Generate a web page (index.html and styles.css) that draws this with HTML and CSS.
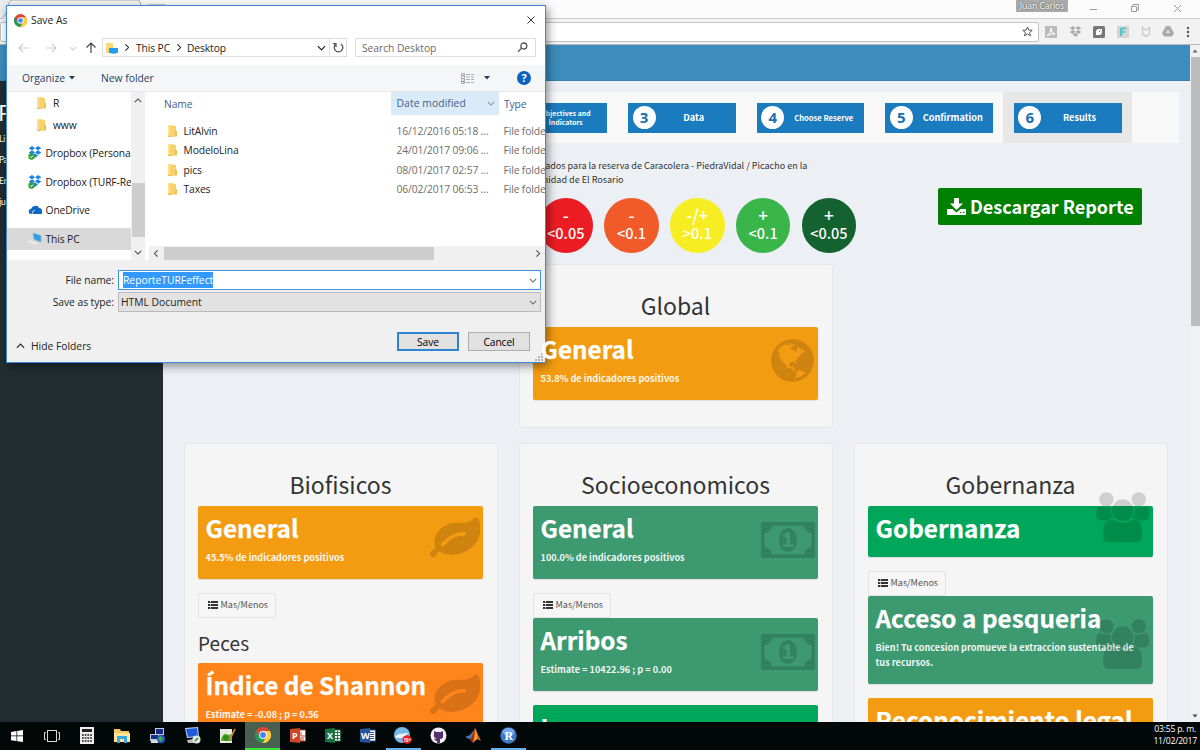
FILE: index.html
```
<!DOCTYPE html>
<html lang="es">
<head>
<meta charset="utf-8">
<title>TURFeffect</title>
<link rel="stylesheet" href="styles.css">
</head>
<body>
<svg class="defs" width="0" height="0">
  <symbol id="leaf" viewBox="0 0 1792 1792"><path d="M1280 704q0-26-19-45t-45-19q-172 0-318 49.5t-259.5 134-235.5 219.5q-19 21-19 45 0 26 19 45t45 19q24 0 45-19 27-24 74-71t67-66q137-124 268.500-176t313.500-52q26 0 45-19t19-45zm512-198q0 95-20 193-46 224-184.500 383t-357.500 268q-214 108-438 108-148 0-286-47-15-5-88-42t-96-37q-16 0-39.500 32t-45 70-52.500 70-60 32q-43 0-63.500-17.500t-45.500-59.500q-2-4-6-11t-5.500-10-3-9.500-1.500-13.500q0-35 31-73.500t68-65.500 68-56 31-48q0-4-14-38t-16-44q-9-51-9-104 0-115 43.500-220t119-184.500 170.500-139 204-95.500q55-18 145-25.500t179.500-9 178.500-6 163.500-24 113.500-56.500l29.500-29.500 29.500-28 27-20 36.500-16 43.500-4.500q39 0 70.500 46t47.500 112 24 124 8 96z"/></symbol>
  <symbol id="money" viewBox="0 0 162 108"><path fill-rule="evenodd" d="M5 0H157Q162 0 162 5V103Q162 108 157 108H5Q0 108 0 103V5Q0 0 5 0ZM33 11Q31 31 11 33V75Q31 77 33 97H129Q131 77 151 75V33Q131 31 129 11ZM81 19C98 19 108 35 108 54S98 89 81 89S54 73 54 54S64 19 81 19ZM77 31L64 41L69 48L76 43V67H66V75H97V67H87V31Z"/></symbol>
  <symbol id="users" viewBox="0 0 160 151"><circle cx="31" cy="22" r="21.500"/><circle cx="128" cy="22" r="21.500"/><circle cx="80" cy="54" r="32.500"/><path d="M45 82Q50 82 56 86Q80 100 104 86Q110 82 115 82Q138 84 138 130Q138 151 118 151H42Q21 151 21 130Q21 84 45 82ZM12 42Q32 51 45 45Q41 66 53 78Q42 77 34 85H17Q0 85 0 68Q0 42 12 42ZM148 42Q128 51 115 45Q119 66 107 78Q118 77 126 85H143Q160 85 160 68Q160 42 148 42Z"/></symbol>
  <symbol id="list" viewBox="0 0 30 24"><path d="M0 0H7V6H0ZM9 0H30V6H9ZM0 9H7V15H0ZM9 9H30V15H9ZM0 18H7V24H0ZM9 18H30V24H9Z"/></symbol>
  <symbol id="folder" viewBox="0 0 9 12"><path fill="#ffe08a" d="M0 0H6V10H0Z"/><path fill="#f6d16c" d="M2 1H8V11.500H2Z"/><path fill="#ecc052" d="M7 6H9V11.500H7ZM0 10L6 12H0Z"/></symbol>
  <symbol id="dropbox" viewBox="0 0 42 36"><path d="M12 0L21 7L12 13L2 7ZM30 0L40 7L30 13L21 7ZM12 13L21 19L12 26L2 20ZM30 13L40 20L30 26L21 19ZM21 22L30 29L21 35L12 29Z"/></symbol>
  <symbol id="chrome" viewBox="0 0 16 16"><circle cx="8" cy="8" r="8" fill="#dc4636"/><path fill="#1e9d57" d="M1.070 4A8 8 0 0 0 7.600 16L11.200 10L8 8L4.600 10Z"/><path fill="#fdcf3d" d="M14.930 4A8 8 0 0 1 7.600 16L11.400 9.500L8 4Z"/><circle cx="8" cy="8" r="3.900" fill="#f5f7fb"/><circle cx="8" cy="8" r="2.900" fill="#4584ee"/></symbol>
  <symbol id="chev" viewBox="0 0 10 6"><path d="M1 1L5 5L9 1" fill="none" stroke="currentColor" stroke-width="1.300"/></symbol>
</svg>

<div class="screen">
  <div class="titlebar">
    <svg class="tab-shape" width="175" height="19"><path d="M0 19Q5 18 7 10Q9 0 12 0H139L147 19" fill="#f6f6f6" stroke="#aaa"/><path d="M148 4H165L169 12H151Z" fill="#d0d0d0"/></svg>
    <span class="user">Juan Carlos</span>
    <svg class="winctl" width="108" height="18" fill="none" stroke="#999"><path d="M9 9.500H16M50.500 6.500H55.500V11.500H50.500ZM52 6V4.500H57.500V10H56M93 5L100 12M100 5L93 12"/></svg>
  </div>
  <div class="toolbar">
    <div class="omnibox"><svg width="11" height="11" viewBox="0 0 11 11"><path d="M5.500 1L6.800 4.100L10.200 4.300L7.600 6.500L8.500 9.800L5.500 8L2.500 9.800L3.400 6.500L.8 4.300L4.200 4.100Z" fill="none" stroke="#555"/></svg></div>
    <div class="exts">
      <svg width="12" height="12"><rect width="12" height="12" fill="#bbb"/><path d="M2 10Q6 7 6 2Q6 7 10 8Q6 7 2 10Z" fill="none" stroke="#fff"/></svg>
      <svg width="13" height="11" fill="#aaa"><use href="#dropbox"/></svg>
      <svg width="12" height="12"><rect width="12" height="12" rx="1.500" fill="#777"/><path d="M3 6Q3 3 6 3H9V6Q9 9 6 9H3Z" fill="#fff"/><path d="M6 6L7.500 4.500" stroke="#777"/></svg>
      <svg width="12" height="12"><rect width="12" height="12" rx="1" fill="#d4d4d4"/><path d="M4 10V2.500H9M4 6H8" fill="none" stroke="#2fc4cf" stroke-width="1.600"/></svg>
      <svg width="10" height="12"><path d="M1.500 1.500V8L5 10.500L8.500 8V1.500L5 4Z" fill="none" stroke="#ccc" stroke-width="1.500"/></svg>
      <svg width="12" height="11"><path d="M4 0H8L12 7L10 10.500H2L0 7Z" fill="#aaa"/><path d="M6 4L8 7H4Z" fill="#eee"/></svg>
      <svg width="4" height="12" fill="#555"><circle cx="2" cy="2" r="1.200"/><circle cx="2" cy="6" r="1.200"/><circle cx="2" cy="10" r="1.200"/></svg>
    </div>
  </div>

  <div class="viewport">
    <div class="page">
      <div class="topbar"></div>
      <div class="body-row">
        <aside class="side"><h1>P</h1><p>Li</p><p>Pa</p><p>En</p><p>ju</p></aside>
        <main class="main">
          <nav class="steps">
            <div class="step"><div class="step-btn"><b>2</b><span class="small">Objectives and<br>Indicators</span></div></div>
            <div class="step"><div class="step-btn"><b>3</b><span>Data</span></div></div>
            <div class="step"><div class="step-btn"><b>4</b><span class="mid">Choose Reserve</span></div></div>
            <div class="step"><div class="step-btn"><b>5</b><span class="conf">Confirmation</span></div></div>
            <div class="step active"><div class="step-btn"><b>6</b><span>Results</span></div></div>
          </nav>
          <div class="grid">
            <section class="intro">
              <p>Resultados para la reserva de Caracolera - PiedraVidal / Picacho en la<br>comunidad de El Rosario</p>
              <div class="legend">
                <div class="dot red"><i>-</i>&lt;0.05</div>
                <div class="dot orange"><i>-</i>&lt;0.1</div>
                <div class="dot yellow"><i>-/+</i>&gt;0.1</div>
                <div class="dot lime"><i>+</i>&lt;0.1</div>
                <div class="dot forest"><i>+</i>&lt;0.05</div>
              </div>
            </section>
            <div class="report"><a class="download"><svg width="19" height="17" viewBox="0 0 19 17" fill="#fff"><path d="M7 0H12V5.500H16L9.500 12L3 5.500H7ZM0 11H5.500L9.500 14.500L13.500 11H19V17H0Z"/><path d="M13 14.500H14.500M16 14.500H17.500" stroke="green"/></svg>Descargar Reporte</a></div>

            <section class="well global">
              <h2>Global</h2>
              <div class="box amber"><h3>General</h3><p>53.8% de indicadores positivos</p>
                <svg class="ic globe" viewBox="128 128 1536 1536"><path d="M896 128q209 0 385.500 103t279.500 279.500 103 385.500-103 385.500-279.500 279.500-385.500 103-385.500-103-279.500-279.500-103-385.500 103-385.500 279.500-279.500 385.500-103zm274 521q-2 1-9.500 9.500t-13.500 9.500q2 0 4.500-5t5-11 3.500-7q6-7 22-15 14-6 52-12 34-8 51 11-2-2 9.500-13t14.500-12q3-2 15-4.500t15-7.500l2-22q-12 1-17.500-7t-6.500-21q0 2-6 8 0-7-4.500-8t-11.500 1-9 1q-10-3-15-7.500t-8-16.500-4-15q-2-5-9.500-11t-9.500-10q-1-2-2.500-5.500t-3-6.500-4-5.500-5.500-2.500-7 5-7.500 10-4.500 5q-3-2-6-1.500t-4.500 1-4.500 3-5 3.500q-3 2-8.500 3t-8.500 2q15-5-1-11-10-4-16-3 9-4 7.500-12t-8.500-14h5q-1-4-8.500-8.500t-17.500-8.500-13-6q-8-5-34-9.500t-33-.5q-5 6-4.500 10.500t4 14 3.500 12.500q1 6-5.500 13t-6.500 12q0 7 14 15.500t10 21.500q-3 8-16 16t-16 12q-5 8-1.500 18.500t10.500 16.500q2 2 1.500 4t-3.500 4.500-5.500 4-6.500 3.500l-3 2q-11 5-20.500-6t-13.500-26q-7-25-16-30-23-8-29 1-5-13-41-26-25-9-58-4 6-1 0-15-7-15-19-12 3-6 4-17.500t1-13.500q3-13 12-23 1-1 7-8.500t9.500-13.500.5-6q35 4 50-11 5-5 11.500-17t10.500-17q9-6 14-5.500t14.500 5.500 14.500 5q14 1 15.500-11t-7.500-20q12 1 3-17-4-7-8-9-12-4-27 5-8 4 2 8-1-1-9.500 10.500t-16.500 17.500-16-5q-1-1-5.500-13.500t-9.500-13.500q-8 0-16 15 3-8-11-15t-24-8q19-12-8-27-7-4-20.500-5t-19.500 4q-5 7-5.500 11.500t5 8 10.500 5.500 11.500 4 8.500 3q14 10 8 14-2 1-8.500 3.500t-11.500 4.500-6 4q-3 4 0 14t-2 14q-5-5-9-17.500t-7-16.500q7 9-25 6l-10-1q-4 0-16 2t-20.500 1-13.500-8q-4-8 0-20 1-4 4-2-4-3-11-9.500t-10-8.500q-46 15-94 41 6 1 12-1 5-2 13-6.500t10-5.500q34-14 42-7l5-5q14 16 20 25-7-4-30-1-20 6-22 12 7 12 5 18-4-3-11.500-10t-14.500-11-15-5q-16 0-22 1-146 80-235 222 7 7 12 8 4 1 5 9t2.500 11 11.500-3q9 8 3 19 1-1 44 27 19 17 21 21 3 11-10 18-1-2-9-9t-9-4q-3 5 .5 18.500t10.500 12.500q-7 0-9.500 16t-2.500 35.500-1 23.500l2 1q-3 12 5.500 34.500t21.500 19.500q-13 3 20 43 6 8 8 9 3 2 12 7.500t15 10 10 10.500q4 5 10 22.500t14 23.500q-2 6 9.500 20t10.500 23q-1 0-2.500 1t-2.500 1q3 7 15.500 14t15.500 13q1 3 2 10t3 11 8 2q2-20-24-62-15-25-17-29-3-5-5.500-15.500t-4.500-14.500q2 0 6 1.500t8.500 3.500 7.500 4 2 3q-3 7 2 17.500t12 18.500 17 19 12 13q6 6 14 19.500t0 13.500q9 0 20 10t17 20q5 8 8 26t5 24q2 7 8.500 13.500t12.500 9.500l16 8 13 7q5 2 18.500 10.500t21.500 11.500q10 4 16 4t14.500-2.500 13.500-3.500q15-2 29 15t21 21q36 19 55 11-2 1 .5 7.500t8 15.500 9 14.500 5.500 8.500q5 6 18 15t18 15q6-4 7-9-3 8 7 20t18 10q14-3 14-32-31 15-49-18 0-1-2.500-5.500t-4-8.500-2.500-8.500 0-7.500 5-3q9 0 10-3.500t-2-12.500-4-13q-1-8-11-20t-12-15q-5 9-16 8t-16-9q0 1-1.500 5.500t-1.500 6.500q-13 0-15-1 1-3 2.500-17.500t3.500-22.500q1-4 5.500-12t7.500-14.500 4-12.500-4.500-9.500-17.500-2.500q-19 1-26 20-1 3-3 10.500t-5 11.500-9 7q-7 3-24 2t-24-5q-13-8-22.500-29t-9.500-37q0-10 2.500-26.500t3-25-5.500-24.500q3-2 9-9.500t10-10.500q2-1 4.500-1.500t4.500 0 4-1.500 3-6q-1-1-4-3-3-3-4-3 7 3 28.500-1.500t27.500 1.500q15 11 22-2 0-1-2.500-9.500t-.5-13.500q5 27 29 9 3 3 15.500 5t17.500 5q3 2 7 5.500t5.500 4.500 5-.5 8.500-6.500q10 14 12 24 11 40 19 44 7 3 11 2t4.500-9.500 0-14-1.500-12.500l-1-8v-18l-1-8q-15-3-18.500-12t1.500-18.500 15-18.500q1-1 8-3.500t15.500-6.500 12.500-8q21-19 15-35 7 0 11-9-1 0-5-3t-7.500-5-4.500-2q9-5 2-16 5-3 7.500-11t7.500-10q9 12 21 2 8-8 1-16 5-7 20.500-10.500t18.500-9.500q7 2 8-2t1-12 3-12q4-5 15-9t13-5l17-11q3-4 0-4 18 2 31-11 10-11-6-20 3-6-3-9.500t-15-5.500q3-1 11.500-.5t10.500-1.500q15-10-7-16-17-5-43 12zm-163 877q206-36 351-189-3-3-12.500-4.500t-12.500-3.500q-18-7-24-8 1-7-2.500-13t-8-9-12.500-8-11-7q-2-2-7-6t-7-5.500-7.500-4.500-8.500-2-10 1l-3 1q-3 1-5.500 2.500t-5.500 3-4 3 0 2.500q-21-17-36-22-5-1-11-5.500t-10.500-7-10-1.500-11.500 7q-5 5-6 15t-2 13q-7-5 0-17.500t2-18.500q-3-6-10.500-4.500t-12 4.500-11.500 8.500-9 6.500-8.500 5.500-8.500 7.500q-3 4-6 12t-5 11q-2-4-11.500-6.500t-9.500-5.500q2 10 4 35t5 38q7 31-12 48-27 25-29 40-4 22 12 26 0 7-8 20.500t-7 21.500q0 6 2 16z"/></svg></div>
            </section>

            <section class="well c1">
              <h2>Biofisicos</h2>
              <div class="box amber"><h3>General</h3><p>45.5% de indicadores positivos</p><svg class="ic leaf"><use href="#leaf"/></svg></div>
              <div class="toggle"><svg width="10" height="8"><use href="#list"/></svg>Mas/Menos</div>
              <h4>Peces</h4>
              <div class="box tangerine"><h3>Índice de Shannon</h3><p>Estimate = -0.08 ; p = 0.56</p><svg class="ic leaf"><use href="#leaf"/></svg></div>
            </section>

            <section class="well c2">
              <h2>Socioeconomicos</h2>
              <div class="box olive"><h3>General</h3><p>100.0% de indicadores positivos</p><svg class="ic money"><use href="#money"/></svg></div>
              <div class="toggle"><svg width="10" height="8"><use href="#list"/></svg>Mas/Menos</div>
              <div class="box olive"><h3>Arribos</h3><p>Estimate = 10422.96 ; p = 0.00</p><svg class="ic money"><use href="#money"/></svg></div>
              <div class="box green"><h3>Ingresos</h3></div>
            </section>

            <section class="well c3">
              <h2>Gobernanza</h2>
              <div class="box green short"><h3>Gobernanza</h3><svg class="ic users"><use href="#users"/></svg></div>
              <div class="toggle"><svg width="10" height="8"><use href="#list"/></svg>Mas/Menos</div>
              <div class="box olive tall"><h3>Acceso a pesqueria</h3><p>Bien! Tu concesion promueve la extraccion sustentable de tus recursos.</p><svg class="ic users"><use href="#users"/></svg></div>
              <div class="box amber"><h3>Reconocimiento legal</h3></div>
            </section>
          </div>
        </main>
      </div>
    </div>
    <div class="vscroll"><svg width="10" height="12"><path d="M2.500 7.500H7.500L5 4.500Z" fill="#666"/></svg><div class="thumb"></div><svg class="down" width="10" height="12"><path d="M2.500 4.500H7.500L5 7.500Z" fill="#444"/></svg></div>
  </div>

  <footer class="taskbar">
    <div class="apps">
      <span><svg width="12" height="12" fill="#fff"><path d="M0 2L5.500 1V5.600H0ZM6.200 .9L12 0V5.600H6.200ZM0 6.300H5.500V11L0 10.200ZM6.200 6.300H12V12L6.200 11.200Z"/></svg></span>
      <span><svg width="16" height="12" fill="none" stroke="#ddd"><rect x="3.500" y=".5" width="9" height="11"/><path d="M2 2.500H.5V9.500H2M14 2.500H15.500V9.500H14"/></svg></span>
      <span><svg width="14" height="17"><rect width="14" height="17" fill="#eee"/><path d="M2 3.500H12" stroke="#222" stroke-width="3"/><path d="M2 8H12M2 11H12M2 14H12" stroke="#222" stroke-width="1.600" stroke-dasharray="1.800 .9"/></svg></span>
      <span><svg width="16" height="14"><path d="M0 0H6L7 2H15V13H0Z" fill="#f3ca62"/><path d="M0 4H16V13H0Z" fill="#ffe59a"/><path d="M3 14V7H13V14H10V10H6V14Z" fill="#38a9e4"/></svg></span>
      <span><svg width="17" height="17"><path d="M6 1H15V8H6ZM1 7H10V14H1Z" fill="#c3cbdc"/><path d="M7 2H14V7H7ZM2 8H9V12H2Z" fill="#182a8c"/><circle cx="12" cy="12" r="4.200" fill="#2458cf"/><path d="M9 11L12 9L14 12L11 15Z" fill="#42b532"/><path d="M2 15H9" stroke="#ddd" stroke-width="2"/></svg></span>
      <span><svg width="17" height="17"><path d="M1 1L14 0L15 10L3 11Z" fill="#c6d8ff"/><path d="M2 2L13 1L14 9L4 10Z" fill="#205add"/><path d="M3 13L10 12V16H4Z" fill="#bbb"/><circle cx="12.500" cy="12.500" r="4" fill="#dce9df"/><path d="M11 14L14 11" stroke="#2c8340" stroke-width="1.500"/></svg></span>
      <span><svg width="17" height="16"><path d="M1 1H13V15H1Z" fill="#e9eddf"/><path d="M2 11Q5 3 9 7L13 6V13H2Z" fill="#5db52c"/><circle cx="7" cy="10" r="3" fill="#348b20"/><path d="M10 13L16 1" stroke="#c38a35" stroke-width="1.700"/></svg></span>
      <span class="current"><svg width="16" height="16"><use href="#chrome"/></svg></span>
      <span><svg class="office" width="16" height="15"><path d="M8 2H15.500V13H8Z" fill="#fff" stroke="#cd4727"/><path d="M11 4V8H15M10 10H14M10 12H14" stroke="#cd4727" fill="none"/><path d="M0 1L10 0V15L0 14Z" fill="#cd4727"/><text x="2" y="11">P</text></svg></span>
      <span><svg class="office" width="16" height="15"><path d="M8 2H15.500V13H8Z" fill="#fff" stroke="#1d7044"/><path d="M10 4.500H15M10 7.500H15M10 10.500H15M12.500 3V12" stroke="#1d7044" fill="none"/><path d="M0 1L10 0V15L0 14Z" fill="#1d7044"/><text x="2" y="11">X</text></svg></span>
      <span><svg class="office" width="16" height="15"><path d="M8 2H15.500V13H8Z" fill="#fff" stroke="#28549a"/><path d="M10 4.500H14M10 6.500H14M10 8.500H14M10 10.500H14" stroke="#28549a" fill="none"/><path d="M0 1L10 0V15L0 14Z" fill="#28549a"/><text x="1" y="11">W</text></svg></span>
      <span class="open"><svg width="18" height="17"><circle cx="8" cy="8" r="8" fill="#75b9e4"/><path d="M1 9L5 7L14 6L12 9L8 11L2 11Z" fill="#e9f2f6"/><ellipse cx="13" cy="12.500" rx="4.600" ry="4.200" fill="#ed1c24"/><text x="9.500" y="14.500" class="badge">10+</text></svg></span>
      <span><svg width="17" height="17"><circle cx="8.500" cy="8.500" r="8" fill="#f3eff6"/><path d="M4 4L6.500 5H10.500L13 4V7Q14 12 10 12V16H7V14Q5 14 4 12L7 12Q3 11 4 7Z" fill="#54306f"/></svg></span>
      <span><svg width="17" height="16"><path d="M0 9L5 7L8 3L7 12L4 11Z" fill="#3f79bd"/><path d="M5 11L10 0L16 13L12 11L8 15Z" fill="#df6424"/><path d="M8 14Q11 7 10 0Q13 8 12 11Z" fill="#f3a53c"/><path d="M5 11Q8 8 10 0L8 15Z" fill="#8c2b22"/></svg></span>
      <span class="open"><svg width="17" height="17"><circle cx="8.500" cy="8.500" r="8.200" fill="#3979c9"/><ellipse cx="8.500" cy="5" rx="6" ry="4" fill="#72aaf0"/><text x="4.500" y="13" class="rr">R</text></svg></span>
    </div>
    <div class="clock">03:55 p. m.<br>11/02/2017</div>
  </footer>
</div>

<div class="dialog">
  <div class="d-title"><svg width="13" height="13"><use href="#chrome"/></svg><span>Save As</span><svg class="close" width="8" height="8" stroke="#333"><path d="M.5 .5L7.500 7.500M7.500 .5L.5 7.500"/></svg></div>
  <div class="d-addr">
    <svg class="arrows" width="80" height="14" fill="none" stroke="#d0d0d0" stroke-width="1.200"><path d="M11 7H1M5 3L1 7L5 11M28 7H38M34 3L38 7L34 11M52 6L55 9L58 6"/><path stroke="#444" d="M73 12V2M68.500 6.500L73 2L77.500 6.500"/></svg>
    <div class="crumbs"><svg width="12" height="12"><path d="M0 1H7V11H0Z" fill="#f9d977"/><path d="M3 6H12V11H3Z" fill="#229cf0"/><path d="M5 12H10" stroke="#1673b0"/></svg><svg class="r" width="8" height="5"><use href="#chev"/></svg><span class="pc">This PC</span><svg class="r r2" width="8" height="5"><use href="#chev"/></svg><span>Desktop</span><svg class="dn" width="9" height="6"><use href="#chev"/></svg><i></i><svg width="11" height="11" fill="none" stroke="#555" stroke-width="1.300"><path d="M3 2A4.300 4.300 0 1 0 8 2M3 5V1.700H0"/></svg></div>
    <div class="search"><span>Search Desktop</span><svg width="11" height="11" fill="none" stroke="#555" stroke-width="1.300"><circle cx="6.800" cy="4" r="3"/><path d="M4.500 6.200L1 9.700"/></svg></div>
  </div>
  <div class="d-tools"><span>Organize</span><svg class="tri" width="6" height="4"><path d="M0 0H6L3 3.500Z" fill="#223b5b"/></svg><span class="nf">New folder</span>
    <svg class="view" width="14" height="11"><path d="M.5 .5H3.500V10.500H.5Z" fill="#eee" stroke="#aaa"/><path d="M1.500 2.500H3" stroke="#48a"/><path d="M1.500 5.500H3" stroke="#d73"/><path d="M1.500 8.500H3" stroke="#383"/><path d="M5 1.500H9M10 1.500H13M5 4H9M10 4H13M5 6.500H9M10 6.500H13M5 9.500H9M10 9.500H13" stroke="#aaa"/></svg><svg class="tri2" width="6" height="4"><path d="M0 0H6L3 3.500Z" fill="#223b5b"/></svg><b class="help">?</b></div>
  <div class="d-body">
    <div class="tree">
      <div class="node sub"><svg width="9" height="12"><use href="#folder"/></svg>R</div>
      <div class="node sub w"><svg width="9" height="12"><use href="#folder"/></svg>www</div>
      <div class="node"><svg width="15" height="14" fill="#1a82e2"><use href="#dropbox" width="14" height="12"/><circle cx="3.500" cy="10.500" r="3.200" fill="#31a035"/><path d="M2 10.500L3.200 11.700L5 9.500" stroke="#fff" fill="none"/></svg>Dropbox (Personal)</div>
      <div class="node"><svg width="15" height="14" fill="#1a82e2"><use href="#dropbox" width="14" height="12"/><circle cx="3.500" cy="10.500" r="3.200" fill="#31a035"/><path d="M2 10.500L3.200 11.700L5 9.500" stroke="#fff" fill="none"/></svg>Dropbox (TURF-Reserve)</div>
      <div class="node"><svg width="15" height="10"><path d="M1 8Q0 4 3 4Q4 1 7 1Q10 0 11 3Q14 3 14 6V9H2Z" fill="#1067c4"/><path d="M4 9Q4 6 7 5" stroke="#fff" fill="none" stroke-width=".8"/></svg>OneDrive</div>
      <div class="node sel"><svg width="15" height="13"><path d="M5 1L13 3.500V10L6 7.500Z" fill="#2f9ee6" stroke="#8fb4cf"/><path d="M0 9L9 12" stroke="#eee" stroke-width="2"/></svg>This PC</div>
    </div>
    <div class="t-scroll"><svg class="up" width="8" height="5"><use href="#chev"/></svg><div></div><svg width="8" height="5"><use href="#chev"/></svg></div>
    <div class="files">
      <div class="f-head"><span>Name</span><span class="dm">Date modified<svg width="8" height="5"><use href="#chev"/></svg></span><span class="ty">Type</span></div>
      <div class="f-row"><svg width="9" height="12"><use href="#folder"/></svg><span>LitAlvin</span><em>16/12/2016 05:18 ...</em><em>File folder</em></div>
      <div class="f-row"><svg width="9" height="12"><use href="#folder"/></svg><span>ModeloLina</span><em>24/01/2017 09:06 ...</em><em>File folder</em></div>
      <div class="f-row"><svg width="9" height="12"><use href="#folder"/></svg><span>pics</span><em>08/01/2017 02:57 ...</em><em>File folder</em></div>
      <div class="f-row"><svg width="9" height="12"><use href="#folder"/></svg><span>Taxes</span><em>06/02/2017 06:53 ...</em><em>File folder</em></div>
      <div class="h-scroll"><svg class="l" width="8" height="5"><use href="#chev"/></svg><div></div><svg class="rt" width="8" height="5"><use href="#chev"/></svg></div>
    </div>
  </div>
  <div class="d-foot">
    <div class="field"><label>File name:</label><div class="inp"><mark>ReporteTURFeffect</mark><svg width="8" height="5"><use href="#chev"/></svg></div></div>
    <div class="field"><label>Save as type:</label><div class="inp sel-box"><span>HTML Document</span><svg width="8" height="5"><use href="#chev"/></svg></div></div>
    <div class="actions"><svg width="9" height="6"><use href="#chev"/></svg><span>Hide Folders</span><button class="ok">Save</button><button>Cancel</button></div>
    <svg class="grip" width="8" height="8" fill="#b0b0b0"><path d="M6 0H8V2H6ZM3 3H5V5H3ZM6 3H8V5H6ZM0 6H2V8H0ZM3 6H5V8H3ZM6 6H8V8H6Z"/></svg>
  </div>
</div>
</body>
</html>
```
FILE: styles.css
```
* { box-sizing: border-box; }
html, body { margin: 0; height: 750px; overflow: hidden; }
body { font-family: "Noto Sans CJK SC", "Open Sans", sans-serif; color: #333; position: relative; width: 1200px; }
h1, h2, h3, h4, p { margin: 0; }
svg { display: block; flex: none; }
.defs { position: absolute; }
.screen { display: flex; flex-direction: column; width: 1200px; height: 750px; overflow: hidden; }

/* browser frame */
.titlebar { height: 19px; flex: none; display: flex; align-items: flex-start; background: #fcfcfc; border-bottom: 1px solid #cfcfcf; }
.user { margin-left: auto; width: 52px; height: 12px; background: #aaa; color: #fff; font: 8.5px/11px "Open Sans", sans-serif; text-align: center; text-shadow: 0 0 2px #333; }
.winctl { margin-left: 13px; margin-right: 11px; }
.tab-shape { background: linear-gradient(90deg, #ececec, #fcfcfc); }
.toolbar { height: 26px; flex: none; display: flex; align-items: center; background: #f2f2f2; border-bottom: 1px solid #b9b9b9; }
.omnibox { width: 1039px; height: 20px; background: #fff; border: 1px solid #c2c2c2; border-radius: 2px; display: flex; align-items: center; justify-content: flex-end; padding-right: 5px; }
.exts { flex: 1; display: flex; align-items: center; justify-content: space-between; padding: 0 10px 0 6px; }
.viewport { flex: none; height: 676.5px; display: flex; overflow: hidden; }
.page { width: 1190px; overflow: hidden; }
.topbar { height: 36px; background: #3c8dbc; border-bottom: 1px solid #367fa9; }
.body-row { display: flex; height: 642px; }
.side { width: 163px; background: #222d32; color: #fff; padding-top: 16px; overflow: hidden; font-size: 8.500px; line-height: 21px; letter-spacing: -.6px; }
.side h1 { font-size: 22px; line-height: 28px; font-weight: 400; margin: 0 0 3px -2px; }
.side p { margin-left: -1px; }
.main { flex: 1; background: #ecf0f5; overflow: hidden; padding-top: 11px; }
.vscroll { width: 10px; background: #f1f1f1; display: flex; flex-direction: column; }
.vscroll .thumb { height: 269px; background: #bcbcbc; margin-left: 1px; }
.vscroll .down { margin-top: auto; }

/* step navigation */
.steps { height: 51px; margin: 0 11.500px 0 12px; background: #f8f8f8; display: flex; justify-content: flex-end; padding-right: 46.500px; }
.step { width: 128.600px; padding: 10.500px; }
.step.active { background: #e7e7e7; }
.step-btn { height: 30px; background: #1b7bbf; color: #fff; display: flex; align-items: center; padding-left: 4.500px; }
.step-btn b { width: 23px; height: 23px; border-radius: 50%; background: #fff; color: #1b6fae; font: bold 15px/23px "Open Sans", sans-serif; text-align: center; flex: none; }
.step-btn span { flex: 1; text-align: center; font-size: 9.200px; font-weight: 700; line-height: 13px; padding-right: 4px; }
.step-btn .conf { padding-right: 0; }
.step-btn .mid { font-size: 7.600px; padding-right: 1px; }
.step-btn .small { font-size: 6.900px; line-height: 9px; padding-right: 3px; }

/* results grid */
.grid { display: grid; grid-template-columns: repeat(3, 313.500px); column-gap: 21.500px; padding-left: 21px; grid-template-rows: 121px 164px auto; }
.intro { grid-column: 2; padding-top: 16px; white-space: nowrap; }
.intro p { font-size: 9.050px; line-height: 14.300px; }
.legend { display: flex; gap: 11.200px; padding-top: 10.500px; margin-left: 19.500px; width: 320px; }
.dot { flex: none; width: 54.600px; height: 54.600px; border-radius: 50%; color: #fff; text-align: center; font-size: 14.500px; line-height: 18px; padding-top: 8px; font-weight: 500; }
.dot i { display: block; font-style: normal; font-size: 17px; }
.red { background: #ec1c24; } .orange { background: #f15a29; } .yellow { background: #f6ee23; }
.lime { background: #3ab54a; } .forest { background: #14622f; }
.report { padding: 45px 25.500px 0 0; display: flex; justify-content: flex-end; align-items: flex-start; }
.download { width: 204px; height: 37px; background: #008000; border-radius: 2px; color: #fff; display: flex; align-items: center; padding-left: 9px; gap: 4px; font-size: 18px; font-weight: 700; line-height: 37px; white-space: nowrap; }
.well { background: #f5f5f5; border: 1px solid #e6e6e6; border-radius: 3px; padding: 27px 13.500px 0 13px; }
.global { grid-column: 2; }
.c1 { grid-column: 1; } .c1, .c2, .c3 { margin-top: 15px; height: 320px; }
h2 { text-align: center; font-size: 23px; line-height: 26px; font-weight: 400; margin-bottom: 8.500px; }
h4 { font-size: 19px; font-weight: 400; line-height: 24px; padding: 13.500px 0 7.500px; letter-spacing: .1px; }
.box { position: relative; height: 73px; margin-bottom: 14.500px; border-radius: 2px; color: #fff; padding: 6px 7.500px; box-shadow: 0 1px 1px rgba(0,0,0,.1); }
.box h3 { font-size: 24.300px; line-height: 32px; font-weight: 700; white-space: nowrap; position: relative; z-index: 1; -webkit-text-stroke: .25px #fff; }
.box p { font-size: 9.150px; line-height: 15px; font-weight: 700; padding-top: 6.500px; position: relative; opacity: .92; }
.short { height: 51px; } .tall { height: 88px; }
.amber { background: #f39c12; } .tangerine { background: #ff851b; } .olive { background: #3d9970; } .green { background: #00a65a; }
.ic { position: absolute; fill: rgba(0,0,0,.15); }
.globe { width: 43px; height: 43px; right: 4px; top: 12.500px; }
.leaf { width: 50.500px; height: 50.500px; right: 3px; top: 8.500px; }
.money { width: 54px; height: 36px; right: 3.500px; top: 16px; }
.users { width: 53.500px; height: 50.500px; right: 3.500px; top: -13.500px; }
.tall .users { top: 23px; }
.toggle { width: 78px; height: 24.500px; border: 1px solid #e2e2e2; border-radius: 2px; background: #f6f6f6; display: flex; align-items: center; gap: 3px; padding-left: 8.500px; font-size: 9px; line-height: 22px; color: #555; }
.toggle svg { fill: #333; }

/* taskbar */
.taskbar { flex: 1; background: #020708; display: flex; justify-content: space-between; position: relative; }
.apps { display: flex; margin-left: -.5px; }
.apps span { width: 35.100px; display: flex; align-items: center; justify-content: center; }
.apps .current { background: #48604f; border-bottom: 2px solid #39e33b; }
.apps .open { box-shadow: inset 0 -2px #6aaeea; }
.office text { font: bold 9px "Open Sans", sans-serif; fill: #fff; }
.badge { font: bold 4.500px "Open Sans", sans-serif; fill: #fff; }
.rr { font: bold 12px "Liberation Serif", serif; fill: #fff; }
.clock { color: #fff; font: 8.600px/12.500px "Open Sans", sans-serif; text-align: center; padding: 1px 3px 0 0; letter-spacing: -.2px; white-space: nowrap; }

/* save dialog */
.dialog { position: absolute; left: 6px; top: 5px; width: 540px; height: 358px; border: 1px solid #3c8bd8; background: #fff; box-shadow: 2px 3px 9px rgba(0,0,0,.45); font: 10.300px/14px "Open Sans", sans-serif; letter-spacing: -.12px; color: #222; display: flex; flex-direction: column; }
.d-title { height: 28px; display: flex; align-items: center; padding: 0 11px 0 7px; gap: 4px; }
.d-title span { letter-spacing: 0; }
.d-title .close { margin-left: auto; margin-right: -1px; }
.d-addr { height: 31px; display: flex; align-items: flex-start; padding: 4px 9px 0 11px; }
.arrows { margin: 3px 4px 0 0; }
.crumbs { width: 245px; height: 19px; border: 1px solid #ddd; display: flex; align-items: center; padding-left: 3px; }
.r { transform: rotate(-90deg); margin: 0 5px 0 5px; }
.r2 { margin-left: 5px; margin-right: 4px; }
.dn { margin-left: auto; margin-right: 3px; }
.crumbs i { width: 1px; height: 17px; background: #ddd; margin-right: 3px; }
.crumbs svg:last-child { margin-right: 2px; }
.search { margin-left: auto; width: 181px; height: 19px; border: 1px solid #ddd; display: flex; align-items: center; justify-content: space-between; padding: 0 7px 0 6px; color: #6b6b6b; letter-spacing: -.05px; }
.d-tools { height: 27px; background: #f5f6f7; border-bottom: 1px solid #e9e9eb; display: flex; align-items: center; padding: 0 14px 0 15px; color: #223f63; letter-spacing: 0; }
.tri { margin-left: 4px; } .nf { margin-left: 26px; }
.view { margin-left: auto; } .tri2 { margin: 0 27px 0 9px; }
.help { width: 14px; height: 14px; border-radius: 50%; background: #0a62bf; color: #fff; font-size: 11px; line-height: 14px; text-align: center; }
.d-body { height: 168px; display: flex; }
.tree { width: 124px; overflow: hidden; white-space: nowrap; padding-top: .5px; }
.node { height: 21.300px; margin-bottom: 7.200px; display: flex; align-items: center; gap: 3px; padding-left: 20.500px; }
.node.sub { padding-left: 30px; gap: 7px; margin-bottom: .5px; }
.node.w { margin-bottom: 7.200px; }
.node.sel { background: #d9d9d9; }
.t-scroll { width: 14px; background: #f0f0f0; display: flex; flex-direction: column; align-items: center; padding: 6px 0 5px; color: #444; }
.t-scroll .up { transform: rotate(180deg); }
.t-scroll div { width: 13px; height: 54px; background: #cdcdcd; margin: auto 0 13px; }
.files { flex: 1; margin-left: 4px; display: flex; flex-direction: column; overflow: hidden; }
.f-head { height: 23px; display: flex; align-items: center; padding-left: 15px; color: #44608a; margin-bottom: 6.500px; }
.f-head span:first-child { width: 227px; }
.dm { width: 108px; height: 23px; line-height: 23px; background: #d9ebf9; padding: 0 4px 0 5.500px; display: flex; align-items: center; justify-content: space-between; letter-spacing: .1px; }
.dm svg { color: #7c97b5; }
.ty { margin-left: 5px; }
.f-row { height: 19.300px; flex: none; display: grid; grid-template-columns: 16px 213px 107px 60px; align-items: center; padding-left: 18.500px; white-space: nowrap; }
.f-row em { font-style: normal; color: #6d6d6d; }
.h-scroll { margin-top: auto; height: 14px; background: #f0f0f0; display: flex; align-items: center; color: #444; padding: 0 3px 0 3px; }
.h-scroll div { width: 270px; height: 13px; background: #cdcdcd; margin-left: 4px; }
.h-scroll .l { transform: rotate(90deg); } .h-scroll .rt { transform: rotate(-90deg); margin-left: auto; }
.d-foot { flex: 1; background: #f0f0f0; position: relative; padding: 10px 4px 0 0; }
.field { display: flex; align-items: center; justify-content: flex-end; margin-bottom: 2px; }
.field label { margin-right: 4px; letter-spacing: -.05px; }
.inp { width: 423px; height: 20px; border: 1px solid #3d94e8; background: #fff; display: flex; align-items: center; justify-content: space-between; padding: 0 3px 0 4px; color: #666; }
.inp mark { background: #3399ff; color: #fff; line-height: 16px; letter-spacing: 0; }
.inp span { color: #222; letter-spacing: 0; }
.sel-box { background: #e2e2e2; border-color: #bbb; padding-left: 2px; }
.actions { display: flex; align-items: center; padding: 18px 11px 0 9px; }
.actions svg { transform: rotate(180deg); margin-right: 6px; position: relative; top: 4px; }
.actions span { position: relative; top: 4px; margin-right: auto; letter-spacing: 0; }
.actions button { width: 62px; height: 19px; border: 1px solid #adadad; background: #e1e1e1; font: inherit; letter-spacing: inherit; padding: 0; margin-left: 9px; }
.actions .ok { border: 2px solid #2e83d2; }
.grip { position: absolute; right: 2px; bottom: 1px; }
```
